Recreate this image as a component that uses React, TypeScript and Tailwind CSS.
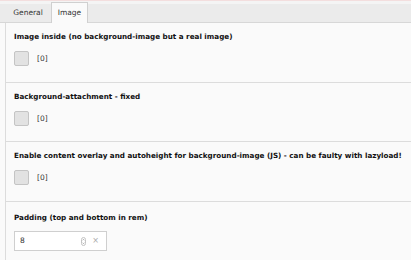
import { useState } from "react"

const font = { fontFamily: '"DejaVu Sans", Verdana, sans-serif' }

const CheckField = ({ label, h }: { label: string; h: string }) => {
  const [checked, setChecked] = useState(false)
  return (
    <div className={`${h} border-b border-[#dcdcdc] pl-[8px] pt-[8px]`}>
      <div className="text-[7.2px] leading-[12px] font-bold text-[#111]">{label}</div>
      <label className="mt-[8px] flex items-center">
        <span
          className="h-[15px] w-[15px] rounded-[2px] border border-[#c4c4c4] bg-[#e2e2e2]"
          onClick={() => setChecked(!checked)}
        />
        <span className="ml-[8px] text-[7.5px] leading-[15px] text-[#333]">[{checked ? 1 : 0}]</span>
      </label>
    </div>
  )
}

export default function App() {
  const [value, setValue] = useState("8")
  return (
    <div className="h-[260px] w-[411px] overflow-hidden bg-[#fafafa]" style={font}>
      <div className="h-[1px] bg-[#f3dede]" />
      <div className="h-[3px] bg-[#f4f4f4]" />
      <div className="flex h-[19px] items-end border-b border-[#d7d7d7] bg-[#ebebeb] pl-[5px]">
        <div className="flex h-[18px] w-[46px] items-center justify-center text-[7.5px] text-[#333]">General</div>
        <div className="-mb-px flex h-[21px] w-[37px] items-center justify-center border border-b-0 border-[#d0d0d0] bg-[#fafafa] text-[7.5px] text-[#333]">
          Image
        </div>
      </div>
      <div className="ml-[5px] border-l border-[#dcdcdc]">
        <CheckField h="h-[60px]" label="Image inside (no background-image but a real image)" />
        <CheckField h="h-[59px]" label="Background-attachment - fixed" />
        <CheckField h="h-[60px]" label="Enable content overlay and autoheight for background-image (JS) - can be faulty with lazyload!" />
        <div className="pl-[8px] pt-[10px] pb-4">
          <div className="text-[7.2px] leading-[12px] font-bold text-[#111]">Padding (top and bottom in rem)</div>
          <div className="mt-[7px] flex h-[20px] w-[93px] items-center border border-[#cfcfcf] bg-white pl-[5px] pr-[7px]">
            <input
              className="w-0 flex-1 bg-transparent text-[7.5px] text-[#333] outline-none"
              value={value}
              onChange={(e) => setValue(e.target.value)}
            />
            <svg width="5" height="9" viewBox="0 0 5 9" className="mr-[6px]">
              <rect x="0.5" y="0.5" width="4" height="8" rx="2" fill="none" stroke="#c4c4c4" />
              <path d="M1.6 3.3 L2.5 2.3 L3.4 3.3 M1.6 5.7 L2.5 6.7 L3.4 5.7" fill="none" stroke="#999" strokeWidth="0.8" />
            </svg>
            <span className="text-[8px] leading-none text-[#aaa]">×</span>
          </div>
        </div>
      </div>
    </div>
  )
}
